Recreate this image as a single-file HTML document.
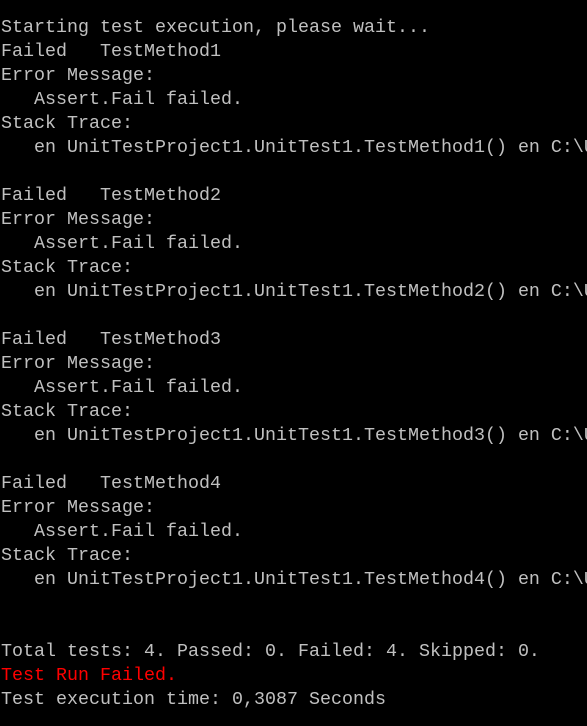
<!DOCTYPE html>
<html><head><meta charset="utf-8"><style>
html,body{margin:0;padding:0;background:#000;width:587px;height:726px;overflow:hidden;position:relative}
pre{margin:0;position:absolute;left:1px;top:16px;width:586px;overflow:hidden;font-family:"Liberation Mono",monospace;font-size:18.33px;line-height:24px;color:#c0c0c0;white-space:pre}
.r{color:#ff0000}
</style></head><body><pre>Starting test execution, please wait...
Failed   TestMethod1
Error Message:
   Assert.Fail failed.
Stack Trace:
   en UnitTestProject1.UnitTest1.TestMethod1() en C:\Users

Failed   TestMethod2
Error Message:
   Assert.Fail failed.
Stack Trace:
   en UnitTestProject1.UnitTest1.TestMethod2() en C:\Users

Failed   TestMethod3
Error Message:
   Assert.Fail failed.
Stack Trace:
   en UnitTestProject1.UnitTest1.TestMethod3() en C:\Users

Failed   TestMethod4
Error Message:
   Assert.Fail failed.
Stack Trace:
   en UnitTestProject1.UnitTest1.TestMethod4() en C:\Users


Total tests: 4. Passed: 0. Failed: 4. Skipped: 0.
<span class="r">Test Run Failed.</span>
Test execution time: 0,3087 Seconds</pre></body></html>
